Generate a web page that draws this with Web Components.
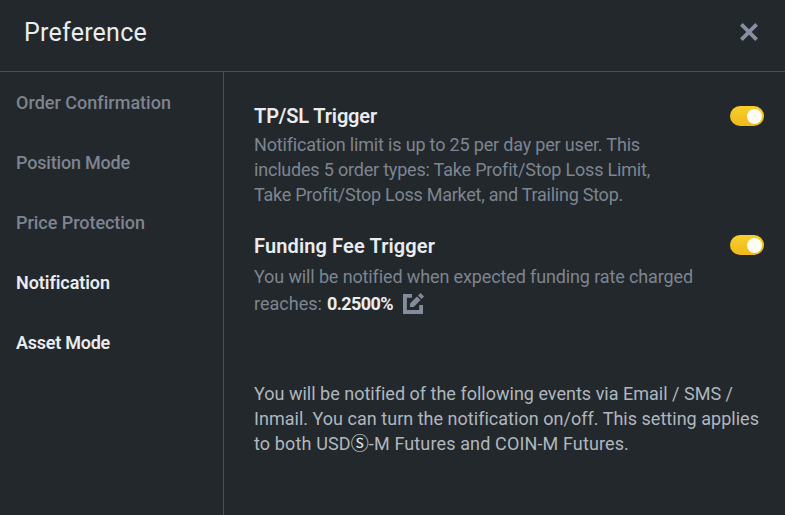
<!DOCTYPE html>
<html lang="en">
<head>
<meta charset="utf-8">
<title>Preference</title>
<style>
  html, body {
    margin: 0;
    height: 100%;
    background: #23282c;
    overflow: hidden;
  }
</style>
</head>
<body>
<preference-dialog></preference-dialog>

<script>
// One line of text, tracked so that it takes up the given width
class TextLine extends HTMLElement {
  constructor() {
    super();
    this.attachShadow({mode: "open"});
  }
  connectedCallback() {
    this.shadowRoot.innerHTML = `
      <style>
        :host { display: flex; white-space: nowrap; }
        span { display: block; font-variant-ligatures: none; }
      </style>
      <span><slot></slot></span>`;
    const span = this.shadowRoot.querySelector("span");
    const target = Number(this.getAttribute("width"));
    if (target) {
      const natural = span.getBoundingClientRect().width;
      span.style.letterSpacing = (target - natural) / this.textContent.length + "px";
    }
  }
}

class ToggleSwitch extends HTMLElement {
  constructor() {
    super();
    this.attachShadow({mode: "open"});
    this.shadowRoot.innerHTML = `
      <style>
        :host {
          display: flex;
          flex: none;
          box-sizing: border-box;
          width: 34px;
          height: 20px;
          padding: 2px;
          align-items: center;
          justify-content: flex-end;
          border-radius: 10px;
          background: linear-gradient(#f7cf2c, #efb91b);
        }
        i { width: 15px; height: 15px; border-radius: 50%; background: #fffdf3; }
      </style>
      <i></i>`;
  }
}

class CloseIcon extends HTMLElement {
  constructor() {
    super();
    this.attachShadow({mode: "open"});
    this.shadowRoot.innerHTML = `
      <style>
        :host { display: block; width: 18px; height: 18px; color: #8790a0; }
        svg { display: block; }
      </style>
      <svg width="18" height="18" viewBox="0 0 18 18" fill="none" stroke="currentColor" stroke-width="3.8">
        <path d="M1.4 1.4 16.6 16.6M16.6 1.4 1.4 16.6"/>
      </svg>`;
  }
}

class EditIcon extends HTMLElement {
  constructor() {
    super();
    this.attachShadow({mode: "open"});
    this.shadowRoot.innerHTML = `
      <style>
        :host { display: block; width: 21px; height: 21px; color: #838c9b; }
        svg { display: block; }
      </style>
      <svg width="21" height="21" viewBox="0 0 21 21" fill="currentColor">
        <path d="M0 1h9v3.7H3.9v12.4h12.3V12H20v9H0z"/>
        <path d="M7 10.4 14 3.4 17.6 7 10.6 14H7z"/>
        <path d="M15.1 2.4 17.5 0 21 3.5 18.6 5.9z"/>
      </svg>`;
  }
}

class NavItem extends HTMLElement {
  constructor() {
    super();
    this.attachShadow({mode: "open"});
    this.shadowRoot.innerHTML = `
      <style>
        :host {
          display: block;
          line-height: 60px;
          font-size: 18px;
          font-weight: 500;
          color: #7d8591;
        }
        :host([bright]) { font-weight: 600; color: #eaecef; }
      </style>
      <slot></slot>`;
  }
}

// Heading with a switch at its right end, the description below
class SettingRow extends HTMLElement {
  constructor() {
    super();
    this.attachShadow({mode: "open"});
    this.shadowRoot.innerHTML = `
      <style>
        :host { display: block; color: #7d8591; }
        .head {
          display: flex;
          align-items: flex-start;
          justify-content: space-between;
          height: 28px;
          line-height: 28px;
          font-size: 20px;
          font-weight: 600;
          color: #eaecef;
        }
        toggle-switch { margin-top: var(--switch-top, 4px); }
        .text { font-size: 18px; line-height: var(--line, 25px); margin-top: var(--gap, 2px); }
      </style>
      <div class="head"><slot name="title"></slot><toggle-switch></toggle-switch></div>
      <div class="text"><slot></slot></div>`;
  }
}

class PreferenceDialog extends HTMLElement {
  constructor() {
    super();
    this.attachShadow({mode: "open"});
    this.shadowRoot.innerHTML = `
      <style>
        :host {
          display: flex;
          flex-direction: column;
          height: 100%;
          font-family: Roboto, "Liberation Sans", sans-serif;
          background: #23282c;
        }
        header {
          display: flex;
          justify-content: space-between;
          box-sizing: border-box;
          height: 72px;
          padding: 0 27px 0 24px;
          border-bottom: 1px solid #4a4e58;
          font-size: 25px;
          line-height: 66px;
          color: #eaecef;
        }
        close-icon { margin-top: 23px; }
        .body { display: flex; flex: 1; }
        nav {
          flex: none;
          box-sizing: border-box;
          width: 224px;
          padding: 1px 0 0 16px;
          border-right: 1px solid #4a4e58;
        }
        main { flex: 1; padding: 30px 21px 0 30px; }
        .funding { margin-top: 25px; --line: 28px; --gap: 3px; --switch-top: 3px; }
        .rate { display: flex; line-height: 26px; height: 28px; }
        .rate b { margin-left: 5px; color: #eaecef; font-weight: 700; }
        .rate edit-icon { margin: 2px 0 0 10px; }
        .note { margin-top: 62px; font-size: 18px; line-height: 25px; color: #b1b6bf; }
        .coin { font: 18px/1 "Noto Sans CJK SC", sans-serif; color: #dfe2e6; }
      </style>
      <header>
        <text-line width="123">Preference</text-line>
        <close-icon></close-icon>
      </header>
      <div class="body">
        <nav>
          <nav-item><text-line width="155">Order Confirmation</text-line></nav-item>
          <nav-item><text-line width="114">Position Mode</text-line></nav-item>
          <nav-item><text-line width="129">Price Protection</text-line></nav-item>
          <nav-item bright><text-line width="94">Notification</text-line></nav-item>
          <nav-item bright><text-line width="94">Asset Mode</text-line></nav-item>
        </nav>
        <main>
          <setting-row>
            <text-line slot="title" width="123">TP/SL Trigger</text-line>
            <text-line width="386">Notification limit is up to 25 per day per user. This</text-line>
            <text-line width="396">includes 5 order types: Take Profit/Stop Loss Limit,</text-line>
            <text-line width="369">Take Profit/Stop Loss Market, and Trailing Stop.</text-line>
          </setting-row>
          <setting-row class="funding">
            <text-line slot="title" width="181">Funding Fee Trigger</text-line>
            <text-line width="439">You will be notified when expected funding rate charged</text-line>
            <div class="rate">
              <text-line width="68">reaches:</text-line>
              <b><text-line width="66">0.2500%</text-line></b>
              <edit-icon></edit-icon>
            </div>
          </setting-row>
          <div class="note">
            <text-line width="479">You will be notified of the following events via Email / SMS /</text-line>
            <text-line width="505">Inmail. You can turn the notification on/off. This setting applies</text-line>
            <text-line width="375">to both USD<span class="coin">Ⓢ</span>-M Futures and COIN-M Futures.</text-line>
          </div>
        </main>
      </div>`;
  }
}

customElements.define("toggle-switch", ToggleSwitch);
customElements.define("close-icon", CloseIcon);
customElements.define("edit-icon", EditIcon);
customElements.define("nav-item", NavItem);
customElements.define("setting-row", SettingRow);
customElements.define("preference-dialog", PreferenceDialog);
customElements.define("text-line", TextLine);
</script>
</body>
</html>
